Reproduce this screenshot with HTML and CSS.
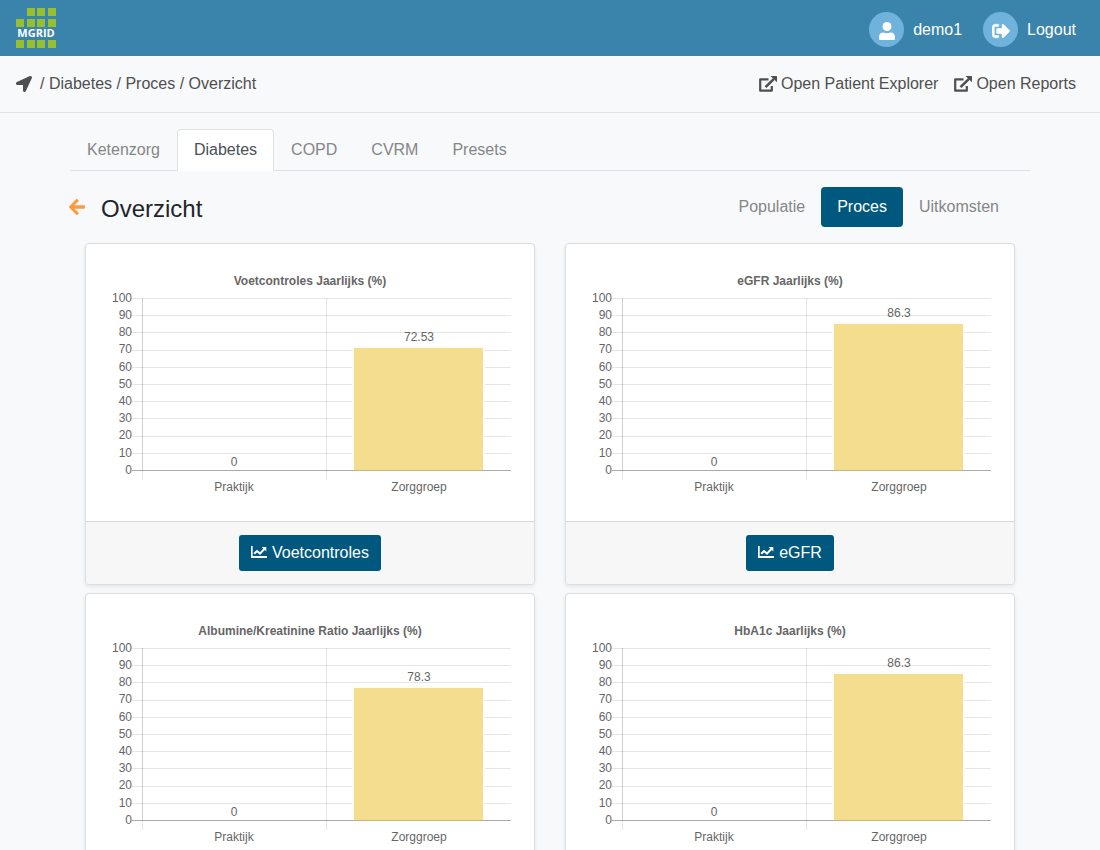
FILE: index.html
```html
<!DOCTYPE html>
<html lang="nl">
<head>
    <meta charset="UTF-8">
    <meta name="viewport" content="width=device-width, initial-scale=1.0">
    <title>MGRID - Overzicht</title>
    <link rel="stylesheet" href="styles.css">
</head>
<body>

    <!-- Shared icons -->
    <svg class="icon-defs" aria-hidden="true">
        <symbol id="icon-user" viewBox="0 0 16 18">
            <circle cx="8" cy="4.500" r="4.500"/>
            <path d="M4.500 10.500c2 1 5 1 7 0 3 0 4.500 2 4.500 4.500v1.500c0 1-.5 1.500-1.500 1.500h-13C.5 18 0 17.500 0 16.500V15c0-2.500 1.500-4.500 4.500-4.500z"/>
        </symbol>
        <symbol id="icon-logout" viewBox="0 0 512 512">
            <path stroke="currentColor" stroke-width="16" d="M497 273L329 441c-15 15-41 4.500-41-17v-96H152c-13.300 0-24-10.700-24-24v-96c0-13.300 10.700-24 24-24h136V88c0-21.400 25.900-32 41-17l168 168c9.300 9.400 9.300 24.600 0 34zM192 436v-40c0-6.600-5.400-12-12-12H96c-17.700 0-32-14.300-32-32V160c0-17.700 14.300-32 32-32h84c6.600 0 12-5.400 12-12V76c0-6.600-5.400-12-12-12H96c-53 0-96 43-96 96v192c0 53 43 96 96 96h84c6.600 0 12-5.400 12-12z"/>
        </symbol>
        <symbol id="icon-location" viewBox="0 0 512 512">
            <path d="M444.520 3.520L28.740 195.420c-47.970 22.390-31.980 92.750 19.190 92.750h175.910v175.910c0 51.170 70.360 67.170 92.750 19.190l191.900-415.780c15.990-38.390-25.590-79.970-63.970-63.970z"/>
        </symbol>
        <symbol id="icon-external" viewBox="0 0 18 16">
            <path fill="none" stroke="currentColor" stroke-width="2.200" stroke-linejoin="round" d="M9.500 3.400H1.200v11.300h11.600V10"/>
            <path fill="none" stroke="currentColor" stroke-width="2.600" d="M6.500 11.200L15 2.800"/>
            <path d="M11.500 0H17.300Q18 0 18 .7V6.300z"/>
        </symbol>
        <symbol id="icon-back" viewBox="0 0 448 512">
            <path stroke="currentColor" stroke-width="16" d="M257.500 445.100l-22.200 22.200c-9.400 9.400-24.600 9.400-33.900 0L7 273c-9.400-9.400-9.400-24.600 0-33.900L201.400 44.700c9.400-9.400 24.600-9.400 33.900 0l22.200 22.200c9.500 9.500 9.300 25-.4 34.300L136.600 216H424c13.300 0 24 10.700 24 24v32c0 13.300-10.700 24-24 24H136.600l120.500 114.800c9.800 9.300 10 24.800.4 34.300z"/>
        </symbol>
        <symbol id="icon-chart" viewBox="0 0 16 12">
            <path d="M0 0h1.700v10H16v2H0z"/>
            <path fill="none" stroke="currentColor" stroke-width="2" d="M3.200 7.800L6 5l3 2.600L13.300 3"/>
            <path d="M10.700 1h4.600v4.600z"/>
        </symbol>
    </svg>

    <header class="topbar">
        <a class="logo" href="#" aria-label="MGRID">
            <svg width="40" height="40" viewBox="0 0 40 40">
                <g class="logo-tiles">
                    <path d="M11 0h8v8h-8zM21 0h8v8h-8zM32 0h8v8h-8z"/>
                    <path d="M0 11h8v8H0zM11 11h8v8h-8zM21 11h8v8h-8zM32 11h8v8h-8z"/>
                    <path d="M0 32h8v8H0zM11 32h8v8h-8zM21 32h8v8h-8zM32 32h8v8h-8z"/>
                </g>
                <text class="logo-text" x="20" y="29" text-anchor="middle">MGRID</text>
            </svg>
        </a>
        <nav class="user-nav">
            <a href="#"><span class="avatar"><svg class="icon-person"><use href="#icon-user"/></svg></span>demo1</a>
            <a href="#"><span class="avatar"><svg class="icon-exit"><use href="#icon-logout"/></svg></span>Logout</a>
        </nav>
    </header>

    <div class="subbar">
        <nav class="breadcrumb">
            <svg class="icon"><use href="#icon-location"/></svg>
            <span>/ <a href="#">Diabetes</a> / <a href="#">Proces</a> / <a href="#">Overzicht</a></span>
        </nav>
        <nav class="open-links">
            <a href="#"><svg class="icon-wide"><use href="#icon-external"/></svg>Open Patient Explorer</a>
            <a href="#"><svg class="icon-wide"><use href="#icon-external"/></svg>Open Reports</a>
        </nav>
    </div>

    <main class="container">
        <nav class="tabs">
            <a href="#">Ketenzorg</a>
            <a class="active" href="#">Diabetes</a>
            <a href="#">COPD</a>
            <a href="#">CVRM</a>
            <a href="#">Presets</a>
        </nav>

        <div class="page-head">
            <a class="back" href="#" aria-label="Terug"><svg><use href="#icon-back"/></svg></a>
            <h1>Overzicht</h1>
            <nav class="pills">
                <a href="#">Populatie</a>
                <a class="active" href="#">Proces</a>
                <a href="#">Uitkomsten</a>
            </nav>
        </div>

        <div class="card-grid" id="cards"></div>
    </main>

    <script src="charts.js"></script>
</body>
</html>
```
FILE: styles.css
```css
* {
    box-sizing: border-box;
}

body {
    margin: 0;
    font-family: "Liberation Sans", Arial, sans-serif;
    font-size: 16px;
    line-height: 24px;
    color: #212529;
    background-color: #f8f9fb;
}

a {
    color: inherit;
    text-decoration: none;
}

svg {
    fill: currentColor;
}

.icon-defs {
    display: none;
}

/* Header */
.topbar {
    display: flex;
    align-items: center;
    justify-content: space-between;
    height: 56px;
    padding: 0 24px 0 16px;
    background-color: #3a83ab;
    color: #fff;
}

.logo svg {
    display: block;
}

.logo-tiles {
    fill: #98bf2f;
}

.logo-text {
    fill: #fff;
    font-family: "Open Sans", "Noto Sans", sans-serif;
    font-size: 11px;
    font-weight: 700;
}

.user-nav {
    display: flex;
    gap: 21px;
    padding-top: 3px;
}

.user-nav a {
    display: flex;
    align-items: center;
    gap: 9px;
}

.avatar {
    display: flex;
    align-items: center;
    justify-content: center;
    width: 35px;
    height: 35px;
    padding-top: 2px;
    border-radius: 50%;
    background-color: #6fb3dd;
}

.icon-person {
    width: 16px;
    height: 18px;
}

.icon-exit {
    width: 18px;
    height: 18px;
}

.subbar {
    display: flex;
    align-items: center;
    justify-content: space-between;
    height: 57px;
    padding: 0 24px 0 16px;
    border-bottom: 1px solid #e2e4e7;
    color: #4f4f4f;
}

.breadcrumb {
    display: flex;
    align-items: center;
    gap: 8px;
}

.icon {
    width: 16px;
    height: 16px;
}

.open-links {
    display: flex;
    gap: 16px;
}

.open-links a {
    display: flex;
    align-items: center;
    gap: 4px;
}

.icon-wide {
    width: 18px;
    height: 16px;
}

/* Page */
.container {
    max-width: 960px;
    margin: 0 auto;
    padding-top: 16px;
}

.tabs {
    display: flex;
    border-bottom: 1px solid #dee2e6;
}

.tabs a {
    margin-bottom: -1px;
    padding: 8px 16px;
    border: 1px solid transparent;
    border-radius: 4px 4px 0 0;
    color: #868686;
}

.tabs .active {
    border-color: #dee2e6 #dee2e6 #fff;
    background-color: #fff;
    color: #495057;
}

.page-head {
    display: flex;
    align-items: center;
    padding: 16px 15px 16px 0;
}

.back {
    display: flex;
    width: 31px;
    margin-left: -1px;
    color: #fd9a3d;
}

.back svg {
    width: 16px;
    height: 18px;
}

h1 {
    margin: 4px 0 0 1px;
    font-size: 24px;
    font-weight: 400;
    line-height: 28px;
}

.pills {
    display: flex;
    margin-left: auto;
}

.pills a {
    padding: 8px 16px;
    border-radius: 4px;
    color: #868686;
}

.pills .active {
    background-color: #00587e;
    color: #fff;
}

.card-grid {
    display: grid;
    grid-template-columns: 1fr 1fr;
    gap: 8px 30px;
    padding: 0 15px 8px;
}

.card {
    border: 1px solid #dcdddf;
    border-radius: 4px;
    background-color: #fff;
    box-shadow: 0 2px 4px rgba(0, 0, 0, 0.08);
}

.card-body {
    padding: 20px;
}

.card-footer {
    padding: 13px 20px;
    border-top: 1px solid #d9d9d9;
    border-radius: 0 0 3px 3px;
    background-color: #f7f7f7;
    text-align: center;
}

.btn {
    display: inline-flex;
    align-items: center;
    gap: 5px;
    height: 36px;
    padding: 0 12px;
    border: none;
    border-radius: 3px;
    background-color: #00587e;
    color: #fff;
    font: inherit;
    vertical-align: top;
    cursor: pointer;
}

.btn:hover {
    background-color: #004766;
}

.btn svg {
    width: 16px;
    height: 12px;
    margin-bottom: 2px;
}

/* Charts */
.chart {
    display: block;
    width: 100%;
    height: auto;
}

.chart text {
    fill: #666;
    font-size: 12px;
}

.chart .title {
    font-weight: 700;
}

.chart .grid {
    stroke: rgba(0, 0, 0, 0.1);
}

.chart .axis {
    stroke: rgba(0, 0, 0, 0.18);
}

.chart .zero {
    stroke: rgba(0, 0, 0, 0.33);
}

.chart .bar-edge {
    fill: #fffdf6;
}

.chart .bar {
    fill: #f4dd8f;
}

@media (max-width: 768px) {
    .card-grid {
        grid-template-columns: 1fr;
    }
}
```
FILE: charts.js
```js
const charts = [
    { title: 'Voetcontroles Jaarlijks (%)', button: 'Voetcontroles', praktijk: 0, zorggroep: 72.53 },
    { title: 'eGFR Jaarlijks (%)', button: 'eGFR', praktijk: 0, zorggroep: 86.3 },
    { title: 'Albumine/Kreatinine Ratio Jaarlijks (%)', button: 'Albumine/Kreatinine Ratio', praktijk: 0, zorggroep: 78.3 },
    { title: 'HbA1c Jaarlijks (%)', button: 'HbA1c', praktijk: 0, zorggroep: 86.3 }
];

// Plot area inside the 408 x 237 drawing
const plot = { left: 36, right: 405, top: 34, bottom: 206 };

function yFor(value) {
    return plot.bottom - (plot.bottom - plot.top) * value / 100;
}

function line(cls, x1, y1, x2, y2) {
    return `<line class="${cls}" x1="${x1}" y1="${y1}" x2="${x2}" y2="${y2}"/>`;
}

function drawBar(value, center) {
    const top = Math.ceil(yFor(value));
    let svg = '';
    if (value > 0) {
        svg += `<rect class="bar-edge" x="${center - 67}" y="${top}" width="133" height="${plot.bottom - top}"/>`;
        svg += `<rect class="bar" x="${center - 65}" y="${top + 2}" width="129" height="${plot.bottom - top - 1}"/>`;
        svg += line('axis', center - 65, plot.bottom + 0.5, center + 64, plot.bottom + 0.5);
    }
    return svg + `<text x="${center}" y="${Math.floor(yFor(value)) - 4}" text-anchor="middle">${value}</text>`;
}

function drawChart(chart) {
    const { left, right, top, bottom } = plot;
    let svg = `<text class="title" x="204" y="21" text-anchor="middle">${chart.title}</text>`;
    for (let tick = 0; tick <= 100; tick += 10) {
        const y = Math.round(yFor(tick));
        if (tick > 0) {
            svg += line('grid', left - 10, y + 0.5, right, y + 0.5);
        }
        svg += `<text x="26" y="${Math.round(yFor(tick) + 3.8)}" text-anchor="end">${tick}</text>`;
    }
    svg += line('axis', left + 0.5, top, left + 0.5, bottom);
    svg += line('grid', left + 0.5, bottom, left + 0.5, bottom + 10);
    svg += line('grid', 220.5, top, 220.5, bottom + 10);
    svg += line('zero', left - 10, bottom + 0.5, right, bottom + 0.5);
    svg += drawBar(chart.praktijk, 128);
    svg += drawBar(chart.zorggroep, 313);
    svg += `<text x="128" y="227" text-anchor="middle">Praktijk</text>`;
    svg += `<text x="313" y="227" text-anchor="middle">Zorggroep</text>`;
    return `<svg class="chart" viewBox="0 0 408 237" role="img" aria-label="${chart.title}">${svg}</svg>`;
}

document.getElementById('cards').innerHTML = charts.map(chart => `
    <div class="card">
        <div class="card-body">${drawChart(chart)}</div>
        <div class="card-footer">
            <button class="btn" type="button"><svg><use href="#icon-chart"/></svg>${chart.button}</button>
        </div>
    </div>
`).join('');
```
